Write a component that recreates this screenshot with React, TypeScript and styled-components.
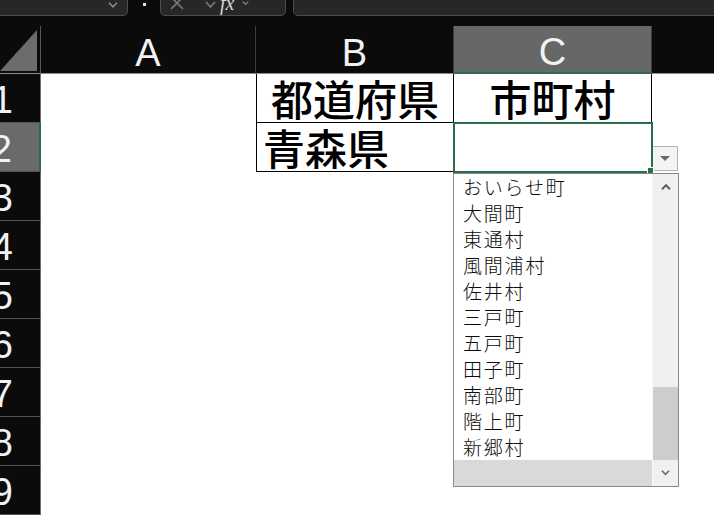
import React from "react";
import styled, { createGlobalStyle } from "styled-components";

const GlobalStyle = createGlobalStyle`
  html, body {
    margin: 0;
    padding: 0;
    background: #0b0b0b;
  }
  body {
    font-family: "Liberation Sans", Arial, sans-serif;
  }
`;

const GREEN = "#2d6c48";
const CJK = `"Noto Sans CJK JP", "Noto Sans", sans-serif`;

const Window = styled.div`
  position: relative;
  width: 714px;
  height: 515px;
  overflow: hidden;
  background: #0b0b0b;
`;

/* formula bar, scrolled so only its lower edge shows */
const Toolbar = styled.div`
  display: flex;
  align-items: flex-end;
  height: 16px;
  overflow: hidden;
`;

const Field = styled.div<{ $width?: number; $offset?: number }>`
  flex: ${(p) => (p.$width ? `0 0 ${p.$width}px` : "1 1 auto")};
  margin-left: ${(p) => p.$offset ?? 0}px;
  height: 26px;
  box-sizing: border-box;
  background: #272727;
  border: 1px solid #4d4d4d;
  border-radius: 5px;
  display: flex;
  align-items: center;
  color: #8a8a8a;
`;

const NameBox = styled(Field)`
  justify-content: flex-end;
  padding: 4px 9px 0 0;
`;

const FormulaTools = styled(Field)`
  padding-left: 9px;
`;

const Separator = styled.div`
  flex: 0 0 32px;
  height: 16px;
  display: flex;
  justify-content: center;
`;

const Dot = styled.span`
  width: 3px;
  height: 3px;
  margin-top: 3px;
  background: #e0e0e0;
`;

const ToolIcon = styled.span<{ $gap?: number }>`
  margin-left: ${(p) => p.$gap ?? 0}px;
  display: flex;
`;

const Fx = styled.span`
  font-family: "Liberation Serif", "Times New Roman", serif;
  font-style: italic;
  font-size: 20px;
  line-height: 20px;
  color: #d6d6d6;
  margin: 0 8px 0 4px;
`;

const Chevron = ({ size = 10, color = "#8a8a8a", up = false, stroke = 1.6 }) => (
  <svg width={size} height={size * 0.6} viewBox="0 0 10 6">
    <path
      d={up ? "M1 5.2 L5 1.2 L9 5.2" : "M1 0.8 L5 4.8 L9 0.8"}
      fill="none"
      stroke={color}
      strokeWidth={stroke}
    />
  </svg>
);

const Sheet = styled.div`
  margin-top: 10px;
  display: grid;
  grid-template-columns: 41px 215px 198px 198px 1fr;
  grid-template-rows: 48px repeat(9, 49px);
`;

const Corner = styled.div`
  box-sizing: border-box;
  border-right: 1px solid #5a5a5a;
  border-bottom: 1px solid #8c8c8c;
  display: flex;
  justify-content: flex-end;
  align-items: flex-end;
  padding: 0 3px 2px 0;
`;

const CornerMark = styled.div`
  width: 37px;
  height: 41px;
  background: #6c6c6c;
  clip-path: polygon(100% 0, 100% 100%, 0 100%);
`;

const ColHeader = styled.div<{ $active?: boolean; $last?: boolean }>`
  box-sizing: border-box;
  display: flex;
  align-items: center;
  justify-content: center;
  font-size: 38px;
  line-height: 40px;
  color: #f2f2f2;
  background: ${(p) => (p.$active ? "#676767" : "#0b0b0b")};
  border-right: ${(p) => (p.$last ? "none" : "1px solid #3c3c3c")};
  border-bottom: ${(p) => (p.$active ? `2px solid ${GREEN}` : "1px solid #8c8c8c")};
  padding-top: 6px;
`;

const RowHeader = styled.div<{ $active?: boolean }>`
  box-sizing: border-box;
  display: flex;
  align-items: center;
  justify-content: flex-end;
  overflow: hidden;
  padding: 3px 27px 0 0;
  font-size: 38px;
  line-height: 40px;
  color: #f2f2f2;
  background: ${(p) => (p.$active ? "#6a6a6a" : "#0b0b0b")};
  border-right: ${(p) => (p.$active ? `2px solid ${GREEN}` : "1px solid #707070")};
  border-bottom: 1px solid #545454;
`;

const Cell = styled.div<{
  $boxed?: boolean;
  $left?: boolean;
  $align?: "center" | "left";
  $selected?: boolean;
}>`
  position: relative;
  box-sizing: border-box;
  background: #ffffff;
  display: flex;
  align-items: flex-end;
  justify-content: ${(p) => (p.$align === "left" ? "flex-start" : "center")};
  padding: 0 0 2px ${(p) => (p.$align === "left" ? 6 : 0)}px;
  font-family: ${CJK};
  font-weight: 500;
  font-size: 42px;
  line-height: 44px;
  color: #000;
  border-left: ${(p) => (p.$left ? "1px solid #000" : "none")};
  border-right: ${(p) => (p.$boxed ? "1px solid #000" : "none")};
  border-bottom: ${(p) => (p.$boxed ? "1px solid #000" : "none")};
  outline: ${(p) => (p.$selected ? `2px solid ${GREEN}` : "none")};
  outline-offset: -1px;
  z-index: ${(p) => (p.$selected ? 1 : 0)};
`;

const FillHandle = styled.span`
  position: absolute;
  right: -1px;
  bottom: -1px;
  width: 5px;
  height: 5px;
  background: ${GREEN};
  outline: 1px solid #fff;
`;

const DropButton = styled.div`
  position: absolute;
  left: 652px;
  top: 146px;
  width: 26px;
  height: 25px;
  box-sizing: border-box;
  background: #f4f4f4;
  border: 1px solid #b3b3b3;
  display: flex;
  align-items: center;
  justify-content: center;
`;

const Triangle = styled.span`
  width: 0;
  height: 0;
  border-left: 5px solid transparent;
  border-right: 5px solid transparent;
  border-top: 5px solid #6a6a6a;
`;

const DropList = styled.div`
  position: absolute;
  left: 453px;
  top: 173px;
  width: 226px;
  height: 314px;
  box-sizing: border-box;
  border: 1px solid #8a8a8a;
  background: #fff;
  display: grid;
  grid-template-columns: 1fr 26px;
  z-index: 2;
`;

const Options = styled.div`
  display: flex;
  flex-direction: column;
`;

const Option = styled.div`
  height: 26px;
  line-height: 26px;
  padding-left: 9px;
  font-family: ${CJK};
  font-weight: 300;
  font-size: 19px;
  letter-spacing: 1.8px;
  color: #0a0a0a;
  white-space: nowrap;
`;

const EmptyBand = styled.div`
  margin-top: auto;
  height: 26px;
  background: #d9d9d9;
`;

const ScrollBar = styled.div`
  display: flex;
  flex-direction: column;
  background: #f0f0f0;
  border-left: 1px solid #fafafa;
`;

const ScrollArrow = styled.div`
  height: 26px;
  display: flex;
  align-items: center;
  justify-content: center;
`;

const Track = styled.div`
  flex: 1;
  display: flex;
  flex-direction: column;
  justify-content: flex-end;
`;

const Thumb = styled.div`
  height: 73px;
  background: #cdcdcd;
`;

const columns = ["A", "B", "C"];
const towns = [
  "おいらせ町",
  "大間町",
  "東通村",
  "風間浦村",
  "佐井村",
  "三戸町",
  "五戸町",
  "田子町",
  "南部町",
  "階上町",
  "新郷村",
];

export default function App() {
  const rows = Array.from({ length: 9 }, (_, i) => i + 1);

  return (
    <Window>
      <GlobalStyle />
      <Toolbar>
        <NameBox $width={140} $offset={-12}>
          <Chevron size={10} />
        </NameBox>
        <Separator>
          <Dot />
        </Separator>
        <FormulaTools $width={126}>
          <ToolIcon>
            <svg width="14" height="14" viewBox="0 0 14 14">
              <path d="M1 1 L13 13 M13 1 L1 13" stroke="#7c7c7c" strokeWidth="1.6" />
            </svg>
          </ToolIcon>
          <ToolIcon $gap={21}>
            <svg width="11" height="12" viewBox="0 0 11 12">
              <path d="M1 5 L5.5 10 L10 5" fill="none" stroke="#7c7c7c" strokeWidth="1.6" />
            </svg>
          </ToolIcon>
          <Fx>fx</Fx>
          <ToolIcon>
            <Chevron size={7} />
          </ToolIcon>
        </FormulaTools>
        <Field $offset={7} style={{ marginRight: -10 }} />
      </Toolbar>

      <Sheet>
        <Corner>
          <CornerMark />
        </Corner>
        {columns.map((c) => (
          <ColHeader key={c} $active={c === "C"}>
            {c}
          </ColHeader>
        ))}
        <ColHeader $last />

        {rows.map((r) => (
          <React.Fragment key={r}>
            <RowHeader $active={r === 2}>{r}</RowHeader>
            <Cell />
            {r === 1 && (
              <>
                <Cell $boxed $left>
                  都道府県
                </Cell>
                <Cell $boxed>市町村</Cell>
              </>
            )}
            {r === 2 && (
              <>
                <Cell $boxed $left $align="left">
                  青森県
                </Cell>
                <Cell $selected>
                  <FillHandle />
                </Cell>
              </>
            )}
            {r > 2 && (
              <>
                <Cell />
                <Cell />
              </>
            )}
            <Cell />
          </React.Fragment>
        ))}
      </Sheet>

      <DropButton>
        <Triangle />
      </DropButton>

      <DropList>
        <Options>
          {towns.map((t) => (
            <Option key={t}>{t}</Option>
          ))}
          <EmptyBand />
        </Options>
        <ScrollBar>
          <ScrollArrow>
            <Chevron size={10} up color="#5c5c5c" stroke={2} />
          </ScrollArrow>
          <Track>
            <Thumb />
          </Track>
          <ScrollArrow>
            <Chevron size={9} color="#6c6c6c" stroke={1.8} />
          </ScrollArrow>
        </ScrollBar>
      </DropList>
    </Window>
  );
}
